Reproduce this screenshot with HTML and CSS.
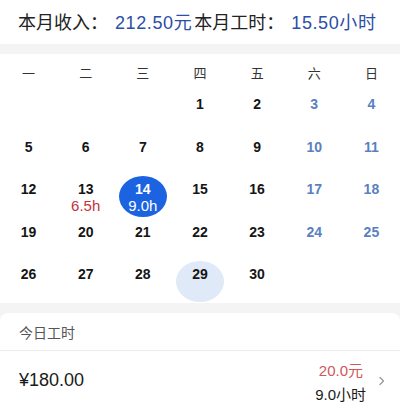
FILE: index.html
```html
<!DOCTYPE html>
<html lang="zh">
<head>
<meta charset="utf-8">
<link rel="stylesheet" href="styles.css">
</head>
<body>
<div class="summary">
  <span class="label">本月收入：</span>
  <span class="value">212.50元</span><span class="label">本月工时：</span>
  <span class="value">15.50小时</span>
</div>
<div class="calendar">
  <div class="weekdays">
    <span>一</span><span>二</span><span>三</span><span>四</span><span>五</span><span>六</span><span>日</span>
  </div>
  <div class="days">
    <div class="cell"></div>
    <div class="cell"></div>
    <div class="cell"></div>
    <div class="cell"><div class="day"><span class="num">1</span></div></div>
    <div class="cell"><div class="day"><span class="num">2</span></div></div>
    <div class="cell weekend"><div class="day"><span class="num">3</span></div></div>
    <div class="cell weekend"><div class="day"><span class="num">4</span></div></div>

    <div class="cell"><div class="day"><span class="num">5</span></div></div>
    <div class="cell"><div class="day"><span class="num">6</span></div></div>
    <div class="cell"><div class="day"><span class="num">7</span></div></div>
    <div class="cell"><div class="day"><span class="num">8</span></div></div>
    <div class="cell"><div class="day"><span class="num">9</span></div></div>
    <div class="cell weekend"><div class="day"><span class="num">10</span></div></div>
    <div class="cell weekend"><div class="day"><span class="num">11</span></div></div>

    <div class="cell"><div class="day"><span class="num">12</span></div></div>
    <div class="cell"><div class="day"><span class="num">13</span><span class="hours">6.5h</span></div></div>
    <div class="cell"><div class="day selected"><span class="num">14</span><span class="hours">9.0h</span></div></div>
    <div class="cell"><div class="day"><span class="num">15</span></div></div>
    <div class="cell"><div class="day"><span class="num">16</span></div></div>
    <div class="cell weekend"><div class="day"><span class="num">17</span></div></div>
    <div class="cell weekend"><div class="day"><span class="num">18</span></div></div>

    <div class="cell"><div class="day"><span class="num">19</span></div></div>
    <div class="cell"><div class="day"><span class="num">20</span></div></div>
    <div class="cell"><div class="day"><span class="num">21</span></div></div>
    <div class="cell"><div class="day"><span class="num">22</span></div></div>
    <div class="cell"><div class="day"><span class="num">23</span></div></div>
    <div class="cell weekend"><div class="day"><span class="num">24</span></div></div>
    <div class="cell weekend"><div class="day"><span class="num">25</span></div></div>

    <div class="cell"><div class="day"><span class="num">26</span></div></div>
    <div class="cell"><div class="day"><span class="num">27</span></div></div>
    <div class="cell"><div class="day"><span class="num">28</span></div></div>
    <div class="cell"><div class="day today"><span class="num">29</span></div></div>
    <div class="cell"><div class="day"><span class="num">30</span></div></div>
    <div class="cell"></div>
    <div class="cell"></div>
  </div>
</div>
<div class="card">
  <div class="card-title">今日工时</div>
  <div class="card-row">
    <div class="amount">¥180.00</div>
    <div class="detail">
      <span class="rate">20.0元</span>
      <span class="time">9.0小时</span>
    </div>
    <svg class="chevron" width="8" height="12" viewBox="0 0 8 12"><path d="M2 2.5 L5.5 6 L2 9.5" fill="none" stroke="#999" stroke-width="1.3" stroke-linecap="round" stroke-linejoin="round"/></svg>
  </div>
</div>
</body>
</html>
```
FILE: styles.css
```css
html, body {
  margin: 0;
  padding: 0;
}
body {
  width: 400px;
  height: 410px;
  overflow: hidden;
  background: #f4f4f5;
  font-family: "Liberation Sans", "Noto Sans CJK SC", sans-serif;
  color: #1a1a1a;
}
.summary {
  height: 44px;
  background: #fff;
  display: flex;
  align-items: center;
  padding-left: 18px;
  padding-bottom: 2px;
  box-sizing: border-box;
  font-size: 18px;
  white-space: pre;
}
.summary .label {
  color: #222;
}
.summary .value {
  color: #2c4ea6;
  margin-left: 7px;
  margin-right: 2px;
  letter-spacing: 0.6px;
}
.calendar {
  margin-top: 10px;
  background: #fff;
  padding: 6px 0 6px;
}
.weekdays {
  display: grid;
  grid-template-columns: repeat(7, 1fr);
  height: 24px;
  align-items: center;
  text-align: center;
  font-size: 13px;
  color: #333;
}
.days {
  display: grid;
  grid-template-columns: repeat(7, 1fr);
  grid-auto-rows: 42.5px;
}
.cell {
  display: flex;
  justify-content: center;
  align-items: flex-start;
}
.day {
  width: 48px;
  height: 41px;
  margin-top: 7px;
  border-radius: 50%;
  display: flex;
  flex-direction: column;
  align-items: center;
  padding-top: 5px;
  box-sizing: border-box;
}
.num {
  font-size: 14px;
  font-weight: 700;
  line-height: 17px;
  color: #151515;
}
.weekend .num {
  color: #5a7fc2;
}
.hours {
  font-size: 15px;
  font-weight: 400;
  line-height: 15px;
  color: #c7303b;
}
.day.selected {
  background: #1b63e0;
}
.day.selected .num,
.day.selected .hours {
  color: #fff;
}
.day.today {
  background: #dfe9f8;
}
.card {
  margin-top: 10px;
  background: #fff;
  border-radius: 8px 8px 0 0;
}
.card-title {
  height: 38px;
  display: flex;
  align-items: center;
  padding-left: 19px;
  padding-top: 2px;
  box-sizing: border-box;
  font-size: 14px;
  color: #555;
  border-bottom: 1px solid #ececec;
}
.card-row {
  height: 60px;
  display: flex;
  align-items: center;
  padding: 0 14px 0 19px;
}
.amount {
  flex: 1;
  font-size: 18px;
  color: #1a1a1a;
}
.detail {
  display: flex;
  flex-direction: column;
  align-items: flex-end;
  gap: 3px;
  font-size: 15px;
  margin-right: 12px;
  padding-top: 2px;
}
.rate {
  color: #d0565a;
  margin-right: 3px;
}
.time {
  color: #1a1a1a;
}
.chevron {
  display: block;
}
```
